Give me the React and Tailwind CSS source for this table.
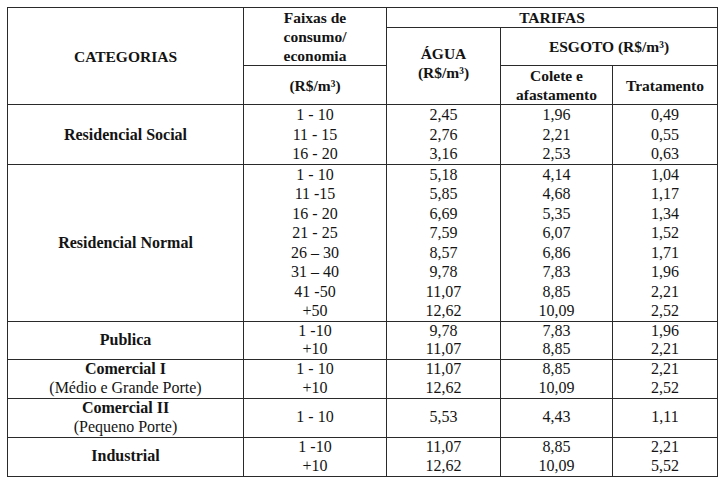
const groups = [
  {
    name: "Residencial Social",
    rows: [
      ["1 - 10", "2,45", "1,96", "0,49"],
      ["11 - 15", "2,76", "2,21", "0,55"],
      ["16 - 20", "3,16", "2,53", "0,63"],
    ],
  },
  {
    name: "Residencial Normal",
    rows: [
      ["1 - 10", "5,18", "4,14", "1,04"],
      ["11 -15", "5,85", "4,68", "1,17"],
      ["16 - 20", "6,69", "5,35", "1,34"],
      ["21 - 25", "7,59", "6,07", "1,52"],
      ["26 – 30", "8,57", "6,86", "1,71"],
      ["31 – 40", "9,78", "7,83", "1,96"],
      ["41 -50", "11,07", "8,85", "2,21"],
      ["+50", "12,62", "10,09", "2,52"],
    ],
  },
  {
    name: "Publica",
    h: "h-[38px]",
    rows: [
      ["1 -10", "9,78", "7,83", "1,96"],
      ["+10", "11,07", "8,85", "2,21"],
    ],
  },
  {
    name: "Comercial I",
    sub: "(Médio e Grande Porte)",
    h: "h-[39px]",
    rows: [
      ["1 - 10", "11,07", "8,85", "2,21"],
      ["+10", "12,62", "10,09", "2,52"],
    ],
  },
  {
    name: "Comercial II",
    sub: "(Pequeno Porte)",
    h: "h-[39px]",
    rows: [["1 - 10", "5,53", "4,43", "1,11"]],
  },
  {
    name: "Industrial",
    h: "h-[39px]",
    rows: [
      ["1 -10", "11,07", "8,85", "2,21"],
      ["+10", "12,62", "10,09", "5,52"],
    ],
  },
];

const serif = "font-['Liberation_Serif','Times_New_Roman',serif]";
const cell = "border border-[#2a2a2a] p-0 text-center align-middle text-[#141414] " + serif;
const head = cell + " font-bold text-[15.5px] leading-[19px]";

export default function App() {
  return (
    <div className="w-[722px] h-[478px] overflow-hidden bg-white pt-[7px] pl-[7px]">
      {/* fonts set on the cells: in quirks mode tables do not inherit them */}
      <table className={"table-fixed border-collapse w-[710px] text-[16px] leading-[19.5px] " + serif}>
        <colgroup>
          <col className="w-[236px]" />
          <col className="w-[143px]" />
          <col className="w-[114px]" />
          <col className="w-[112px]" />
          <col className="w-[105px]" />
        </colgroup>
        <thead>
          <tr className="h-[18px]">
            <th rowSpan={3} className={head}>CATEGORIAS</th>
            <th rowSpan={2} className={head + " leading-[18px]"}>
              Faixas de
              <br />
              consumo/
              <br />
              economia
            </th>
            <th colSpan={3} className={head}>TARIFAS</th>
          </tr>
          <tr className="h-[36px]">
            <th rowSpan={2} className={head}>
              <div className="-mt-[6px]">
                ÁGUA
                <br />
                (R$/m³)
              </div>
            </th>
            <th colSpan={2} className={head}>ESGOTO (R$/m³)</th>
          </tr>
          <tr className="h-[38px]">
            <th className={head}>(R$/m³)</th>
            <th className={head + " leading-[17px]"}>
              Colete e
              <br />
              afastamento
            </th>
            <th className={head}>Tratamento</th>
          </tr>
        </thead>
        <tbody>
          {groups.map((g) => {
            const lead = g.h ? " leading-[18.5px]" : " leading-[19.5px]";
            return (
              <tr key={g.name} className={g.h || ""}>
                <td className={cell + " text-[16px]" + lead}>
                  <div className="font-bold">{g.name}</div>
                  {g.sub && <div>{g.sub}</div>}
                </td>
                {[0, 1, 2, 3].map((c) => (
                  <td key={c} className={cell + " text-[16px]" + lead}>
                    {g.rows.map((r, i) => (
                      <div key={i}>{r[c]}</div>
                    ))}
                  </td>
                ))}
              </tr>
            );
          })}
        </tbody>
      </table>
    </div>
  );
}
